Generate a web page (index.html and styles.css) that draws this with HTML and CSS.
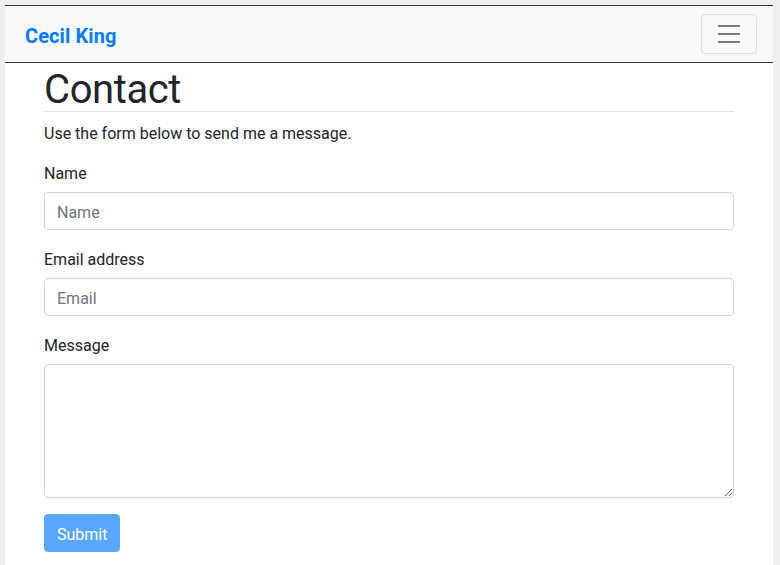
FILE: index.html
```html
<!DOCTYPE html>
<html lang="en">
<head>
<meta charset="utf-8">
<title>Contact - Cecil King</title>
<link rel="stylesheet" href="styles.css">
</head>
<body>
<div class="page">
  <nav class="navbar">
    <a class="brand" href="#">Cecil King</a>
    <button class="toggler" type="button" aria-label="Toggle navigation">
      <svg width="30" height="30" viewBox="0 0 30 30"><path d="M4 7h22M4 15h22M4 23h22" stroke="rgba(0,0,0,0.5)" stroke-width="2" stroke-linecap="butt"/></svg>
    </button>
  </nav>
  <main class="container">
    <h1 class="title">Contact</h1>
    <p class="lead-text">Use the form below to send me a message.</p>
    <form class="form">
      <div class="group">
        <label for="name">Name</label>
        <input id="name" class="control" type="text" placeholder="Name">
      </div>
      <div class="group">
        <label for="email">Email address</label>
        <input id="email" class="control" type="email" placeholder="Email">
      </div>
      <div class="group">
        <label for="msg">Message</label>
        <textarea id="msg" class="control area" rows="5"></textarea>
      </div>
      <button class="submit" type="submit" disabled>Submit</button>
    </form>
  </main>
</div>
</body>
</html>
```
FILE: styles.css
```css
html, body {
  margin: 0;
  padding: 0;
  height: 100%;
}
body {
  background: #efefef;
  font-family: Roboto, "Noto Sans", sans-serif;
  font-size: 16px;
  line-height: 1.5;
  color: #212529;
  overflow: hidden;
}
.page {
  margin: 5px 0 0 5px;
  width: 768px;
  min-height: 560px;
  background: #fff;
  border-top: 1px solid #343a40;
}
.navbar {
  display: flex;
  align-items: center;
  justify-content: space-between;
  background: #f8f9fa;
  padding: 8px 16px 8px 20px;
  border-bottom: 1px solid #343a40;
}
.brand {
  color: #007bff;
  font-weight: 700;
  font-size: 20px;
  line-height: 30px;
  padding: 7px 0 3px;
  letter-spacing: 0.1px;
  text-decoration: none;
}
.toggler {
  width: 56px;
  height: 40px;
  padding: 4px 12px;
  display: flex;
  align-items: center;
  justify-content: center;
  background: transparent;
  border: 1px solid rgba(0,0,0,0.1);
  border-radius: 4px;
}
.toggler svg { display: block; }
.container {
  width: 690px;
  margin: 0 auto;
  padding: 0 15px;
}
.title {
  margin: 0 0 8px;
  padding-top: 6px;
  font-size: 40px;
  font-weight: 400;
  line-height: 42px;
  letter-spacing: -0.4px;
  border-bottom: 1px solid #dee2e6;
}
.lead-text {
  margin: 0 0 14px;
  padding-top: 2px;
}
.group {
  display: flex;
  flex-direction: column;
  margin-bottom: 16px;
}
.group label {
  padding-top: 2px;
  margin-bottom: 6px;
}
.control {
  display: block;
  box-sizing: border-box;
  width: 100%;
  height: 38px;
  padding: 7px 12px 5px;
  font-family: inherit;
  font-size: 16px;
  line-height: 24px;
  color: #495057;
  background: #fff;
  border: 1px solid #ced4da;
  border-radius: 4px;
  margin: 0;
}
.control::placeholder {
  color: #6c757d;
}
.area {
  height: 134px;
  resize: vertical;
}
.submit {
  display: block;
  height: 38px;
  padding: 8px 12px 4px;
  font-family: inherit;
  font-size: 16px;
  line-height: 24px;
  color: #fff;
  background: #007bff;
  border: 1px solid #007bff;
  border-radius: 4px;
  opacity: 0.65;
}
```
